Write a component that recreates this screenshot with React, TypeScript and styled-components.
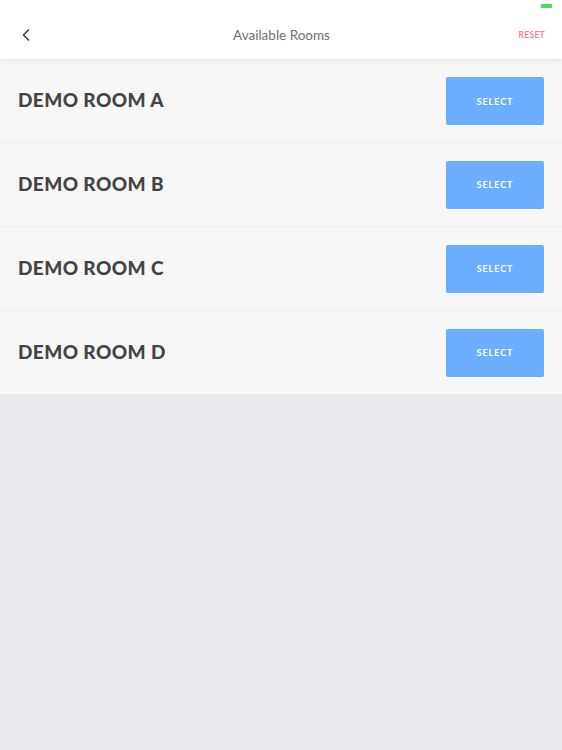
import styled, { createGlobalStyle } from 'styled-components'

const rooms = ['DEMO ROOM A', 'DEMO ROOM B', 'DEMO ROOM C', 'DEMO ROOM D']

const GlobalStyle = createGlobalStyle`
  html, body {
    margin: 0;
    padding: 0;
    background: #ebebef;
  }
  body {
    font-family: Lato, "Open Sans", "Liberation Sans", sans-serif;
  }
`

export default function App() {
  return (
    <>
      <GlobalStyle />
      <Page>
        <Header>
          <BackButton aria-label="Back">
            <svg width="8" height="12" viewBox="0 0 8 12" fill="none">
              <path
                d="M6.5 1L1.5 6L6.5 11"
                stroke="#3c3c3c"
                strokeWidth="1.6"
                strokeLinecap="round"
                strokeLinejoin="round"
              />
            </svg>
          </BackButton>
          <Title>Available Rooms</Title>
          <ResetButton>RESET</ResetButton>
          <Battery />
        </Header>
        <RoomList>
          {rooms.map((room) => (
            <RoomRow key={room}>
              <RoomName>{room}</RoomName>
              <SelectButton>SELECT</SelectButton>
            </RoomRow>
          ))}
        </RoomList>
      </Page>
    </>
  )
}

const Page = styled.div`
  min-height: 750px;
  background: #ebebef;
`

const Header = styled.header`
  position: relative;
  z-index: 1;
  height: 59px;
  display: grid;
  grid-template-columns: 1fr auto 1fr;
  align-items: center;
  padding: 0 17px 0 18px;
  background: #ffffff;
  box-shadow: 0 1px 6px rgba(0, 0, 0, 0.09);
`

const BackButton = styled.button`
  justify-self: start;
  display: flex;
  align-items: center;
  padding: 4px;
  margin-top: 10px;
  border: none;
  background: none;
`

const Title = styled.h1`
  margin: 10px 0 0;
  font-size: 13.5px;
  font-weight: 400;
  color: #6f6f73;
`

const ResetButton = styled.button`
  justify-self: end;
  margin-top: 10px;
  padding: 0;
  border: none;
  background: none;
  font-family: inherit;
  font-size: 8.5px;
  font-weight: 700;
  letter-spacing: 0.3px;
  color: #f38590;
`

const Battery = styled.span`
  position: absolute;
  top: 4px;
  right: 10px;
  width: 11px;
  height: 4px;
  border-radius: 1px;
  background: #4cd964;
`

const RoomList = styled.ul`
  list-style: none;
  margin: 0;
  padding: 0;
`

const RoomRow = styled.li`
  height: 84px;
  box-sizing: border-box;
  display: flex;
  align-items: center;
  justify-content: space-between;
  padding: 0 18px;
  background: #f7f7f7;
  border-top: 1px solid #efefef;

  &:first-child {
    border-top: none;
    height: 83px;
    padding-top: 1px;
  }
`

const RoomName = styled.h2`
  margin: 0 0 3px;
  font-size: 19px;
  font-weight: 900;
  letter-spacing: 0.4px;
  color: #444444;
`

const SelectButton = styled.button`
  width: 98px;
  height: 48px;
  border: none;
  border-radius: 2px;
  background: #6aaefd;
  font-family: inherit;
  font-size: 9px;
  font-weight: 700;
  letter-spacing: 0.9px;
  color: #ffffff;
`
